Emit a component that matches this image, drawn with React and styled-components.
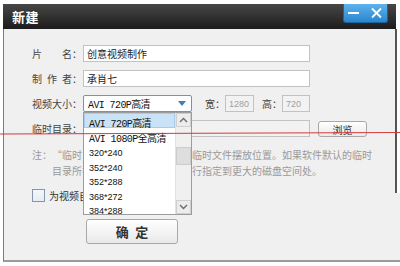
import styled, { createGlobalStyle } from "styled-components";

const GlobalStyle = createGlobalStyle`
  html, body { margin: 0; background: #fff; }
  body { font-family: "Noto Sans CJK SC", "Liberation Sans", sans-serif; }
`;

const Page = styled.div`
  position: relative;
  width: 400px;
  height: 266px;
  overflow: hidden;
`;

const Window = styled.div`
  width: 397px;
  margin: 4px 0 0 3px;
`;

const TitleBar = styled.div`
  width: 393px;
  height: 25px;
  box-sizing: border-box;
  padding: 0 8px 0 9px;
  display: flex;
  justify-content: space-between;
  align-items: flex-start;
  background: linear-gradient(#474747, #1c1c1c);
`;

const Title = styled.span`
  color: #fff;
  font-size: 13px;
  font-weight: 700;
  line-height: 25px;
  letter-spacing: 0.5px;
`;

const Controls = styled.div`
  width: 45px;
  height: 19px;
  box-sizing: border-box;
  border: 1px solid #1d64a0;
  border-top: 0;
  border-radius: 0 0 3px 3px;
  background: linear-gradient(#5eb3eb, #2a85cf);
  display: flex;
  align-items: center;
  justify-content: center;
`;

const Body = styled.div`
  position: relative;
  height: 233px;
  box-sizing: border-box;
  padding: 16px 0 0 28px;
  border-left: 1px solid #7a7a7a;
  border-bottom: 2px solid #9a9a9a;
  background: linear-gradient(#fff, #fff) right top / 4px 164px no-repeat, #f0f0f0;

  &::after {
    content: "";
    position: absolute;
    right: 3px;
    top: 0;
    width: 2px;
    height: 164px;
    background: #555;
  }
`;

const Form = styled.div`
  display: flex;
  flex-direction: column;
  gap: 8px;
`;

const Row = styled.div`
  display: flex;
  align-items: center;
  height: 17px;
`;

const Label = styled.span`
  width: 51px;
  font-size: 10px;
  color: #444;
  white-space: pre;
`;

const TextInput = styled.input`
  width: ${(p) => p.$w}px;
  height: 17px;
  box-sizing: border-box;
  margin: 0;
  padding: 0 3px;
  border: 1px solid #c2c2c2;
  background: ${(p) => (p.$disabled ? "#f2f2f2" : "#fff")};
  color: ${(p) => (p.$disabled ? "#a0a0a0" : "#222")};
  font-family: ${(p) =>
    p.$latin ? '"Liberation Sans", sans-serif' : '"Noto Sans CJK SC", sans-serif'};
  font-size: ${(p) => (p.$latin ? 9 : 10)}px;
  outline: none;
`;

const SelectWrap = styled.div`
  position: relative;
  width: 109px;
  height: 17px;
`;

const SelectBox = styled.div`
  height: 17px;
  box-sizing: border-box;
  border: 1px solid #5b9ad4;
  border-radius: 2px;
  background: #fff;
  display: flex;
  align-items: center;
  justify-content: space-between;
  padding: 0 5px 0 4px;
`;

const MonoText = styled.span`
  font-family: "Liberation Mono", "Noto Sans CJK SC", monospace;
  font-size: 10px;
  letter-spacing: -0.6px;
  color: #111;
  white-space: nowrap;
`;

const DropList = styled.div`
  position: absolute;
  top: 100%;
  left: 0;
  width: 109px;
  height: 103px;
  box-sizing: border-box;
  border: 1px solid #9c9c9c;
  background: #fff;
  display: flex;
  z-index: 2;
`;

const Items = styled.div`
  flex: 1;
`;

const Item = styled.div`
  height: 14.5px;
  box-sizing: border-box;
  padding-left: 4px;
  background: ${(p) => (p.$active ? "#c9e2f6" : "transparent")};
  border: 1px solid ${(p) => (p.$active ? "#a6cdee" : "transparent")};
  border-width: ${(p) => (p.$active ? "1px" : "0 1px")};
  line-height: ${(p) => (p.$active ? "12.5px" : "14.5px")};
`;

const NumText = styled.span`
  font-family: "Liberation Sans", sans-serif;
  font-size: 9px;
  color: #111;
`;

const ScrollBar = styled.div`
  position: relative;
  width: 15px;
  background: #f0f0f0;
  border-left: 1px solid #e2e2e2;
  display: flex;
  flex-direction: column;
  justify-content: space-between;
`;

const ScrollBtn = styled.div`
  height: 14px;
  box-sizing: border-box;
  border: 1px solid #cfcfcf;
  background: #ececec;
  display: flex;
  align-items: center;
  justify-content: center;
`;

const Thumb = styled.div`
  position: absolute;
  left: 0;
  top: 34px;
  width: 15px;
  height: 18px;
  box-sizing: border-box;
  border: 1px solid #cdcdcd;
  background: #dedede;
`;

const Unit = styled.span`
  margin-left: ${(p) => p.$ml}px;
  width: 20px;
  font-size: 10px;
  color: #444;
`;

const Button = styled.button`
  margin: 0 0 0 ${(p) => p.$ml || 0}px;
  width: ${(p) => p.$w}px;
  height: ${(p) => p.$h}px;
  padding: 0;
  border: 1px solid #a8a8a8;
  border-radius: 3px;
  background: linear-gradient(#ffffff, #e9e9e9);
  font-family: "Noto Sans CJK SC", sans-serif;
  font-size: ${(p) => p.$fs}px;
  font-weight: ${(p) => p.$fw || 400};
  color: #333;
`;

const Note = styled.div`
  margin-top: 10px;
  display: flex;
  font-size: 10px;
  line-height: 16px;
  color: #9a9a9a;
  white-space: nowrap;
`;

const NoteLabel = styled.span`
  width: 20px;
`;

const CheckRow = styled.label`
  margin-top: 10px;
  display: flex;
  align-items: center;
  gap: 4px;
  height: 13px;
  font-size: 10px;
  color: #333;
`;

const CheckBox = styled.span`
  width: 13px;
  height: 13px;
  box-sizing: border-box;
  border: 1px solid #8496a8;
  background: linear-gradient(#f4f7fa, #e6ecf1);
`;

const Footer = styled.div`
  margin-top: 16px;
`;

const Annotation = styled.svg`
  position: absolute;
  left: 0;
  top: 0;
  pointer-events: none;
  z-index: 5;
`;

const Chevron = ({ up }) => (
  <svg width="9" height="6" viewBox="0 0 9 6">
    <polyline
      points={up ? "1,5 4.5,1.5 8,5" : "1,1 4.5,4.5 8,1"}
      fill="none"
      stroke="#6a6a6a"
      strokeWidth="1.4"
    />
  </svg>
);

const sizes = ["320*240", "352*240", "352*288", "368*272", "384*288"];

export default function App() {
  return (
    <Page>
      <GlobalStyle />
      <Window>
        <TitleBar>
          <Title>新建</Title>
          <Controls>
            <svg width="43" height="18" viewBox="0 0 43 18">
              <line x1="4" y1="9" x2="15" y2="9" stroke="#fff" strokeWidth="2" />
              <line x1="28" y1="4.5" x2="37" y2="13.5" stroke="#fff" strokeWidth="1.8" />
              <line x1="37" y1="4.5" x2="28" y2="13.5" stroke="#fff" strokeWidth="1.8" />
            </svg>
          </Controls>
        </TitleBar>
        <Body>
          <Form>
            <Row>
              <Label>{"片\u3000\u3000名："}</Label>
              <TextInput $w={227} readOnly value="创意视频制作" />
            </Row>
            <Row>
              <Label>{"制\u2002作\u2002者："}</Label>
              <TextInput $w={227} readOnly value="承肖七" />
            </Row>
            <Row>
              <Label>视频大小：</Label>
              <SelectWrap>
                <SelectBox>
                  <MonoText>AVI 720P高清</MonoText>
                  <svg width="8" height="5" viewBox="0 0 8 5">
                    <polygon points="0,0 8,0 4,5" fill="#3d7fbf" />
                  </svg>
                </SelectBox>
                <DropList>
                  <Items>
                    <Item $active>
                      <MonoText>AVI 720P高清</MonoText>
                    </Item>
                    <Item>
                      <MonoText>AVI 1080P全高清</MonoText>
                    </Item>
                    {sizes.map((s) => (
                      <Item key={s}>
                        <NumText>{s}</NumText>
                      </Item>
                    ))}
                  </Items>
                  <ScrollBar>
                    <ScrollBtn>
                      <Chevron up />
                    </ScrollBtn>
                    <Thumb />
                    <ScrollBtn>
                      <Chevron />
                    </ScrollBtn>
                  </ScrollBar>
                </DropList>
              </SelectWrap>
              <Unit $ml={13}>宽：</Unit>
              <TextInput $w={29} $disabled $latin readOnly value="1280" />
              <Unit $ml={8}>高：</Unit>
              <TextInput $w={28} $disabled $latin readOnly value="720" />
            </Row>
            <Row>
              <Label>临时目录：</Label>
              <TextInput $w={227} $disabled readOnly value="" />
              <Button $ml={8} $w={49} $h={16} $fs={10}>
                浏览
              </Button>
            </Row>
          </Form>
          <Note>
            <NoteLabel>注：</NoteLabel>
            <div>
              “临时目录”是视频制作过程中临时文件摆放位置。如果软件默认的临时
              <br />
              目录所在的磁盘空间不足，请自行指定到更大的磁盘空间处。
            </div>
          </Note>
          <CheckRow>
            <CheckBox />
            为视频自动添加字幕
          </CheckRow>
          <Footer>
            <Button $ml={54} $w={92} $h={25} $fs={13} $fw={700}>
              {"确\u2002定"}
            </Button>
          </Footer>
        </Body>
      </Window>
      <Annotation width="400" height="266" viewBox="0 0 400 266">
        <line x1="0" y1="134" x2="400" y2="132.5" stroke="#d23a3a" strokeWidth="1" />
      </Annotation>
    </Page>
  );
}
